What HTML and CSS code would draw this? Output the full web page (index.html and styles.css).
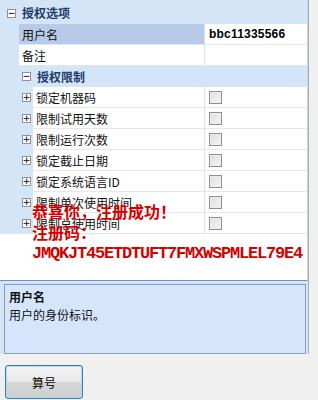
FILE: index.html
```html
<!DOCTYPE html>
<html>
<head>
<meta charset="utf-8">
<link rel="stylesheet" href="styles.css">
</head>
<body>
<div class="frame">
  <div class="grid">
    <div class="cat top"><span class="box">&minus;</span><span class="cat-text">授权选项</span></div>
    <div class="row sel"><span class="margin"></span><span class="name">用户名</span><span class="val strong">bbc11335566</span></div>
    <div class="row"><span class="margin"></span><span class="name">备注</span><span class="val"></span></div>
    <div class="cat sub"><span class="box">&minus;</span><span class="cat-text">授权限制</span></div>
    <div class="row sub"><span class="margin"><span class="box">+</span></span><span class="name">锁定机器码</span><span class="val"><span class="check"></span></span></div>
    <div class="row sub"><span class="margin"><span class="box">+</span></span><span class="name">限制试用天数</span><span class="val"><span class="check"></span></span></div>
    <div class="row sub"><span class="margin"><span class="box">+</span></span><span class="name">限制运行次数</span><span class="val"><span class="check"></span></span></div>
    <div class="row sub"><span class="margin"><span class="box">+</span></span><span class="name">锁定截止日期</span><span class="val"><span class="check"></span></span></div>
    <div class="row sub"><span class="margin"><span class="box">+</span></span><span class="name">锁定系统语言ID</span><span class="val"><span class="check"></span></span></div>
    <div class="row sub"><span class="margin"><span class="box">+</span></span><span class="name">限制单次使用时间</span><span class="val"><span class="check"></span></span></div>
    <div class="row sub"><span class="margin"><span class="box">+</span></span><span class="name">限制总使用时间</span><span class="val"><span class="check"></span></span></div>
    <div class="notice">
      <div class="notice-line">恭喜你，注册成功！</div>
      <div class="notice-line">注册码：</div>
      <div class="notice-code">JMQKJT45ETDTUFT7FMXWSPMLEL79E4</div>
    </div>
  </div>
  <div class="help">
    <div class="help-title">用户名</div>
    <div class="help-text">用户的身份标识。</div>
  </div>
</div>
<button class="btn">算号</button>
</body>
</html>
```
FILE: styles.css
```css
html, body {margin: 0; padding: 0;}
body {background: #f0f0f0; font: 12px "Liberation Sans", "Noto Sans CJK SC", sans-serif; color: #000; width: 318px; height: 400px; overflow: hidden;}

.frame {width: 308px; height: 354px; background: #d5e5f8; border-right: 1px solid #a3adbb; display: flex; flex-direction: column;}
.grid {position: relative; height: 280px; background: #fff; border-bottom: 1px solid #6f8fc4; border-right: 1px solid #c9d4e3; display: flex; flex-direction: column;}

.cat {display: flex; align-items: center; background: #d5e5f8; color: #1d3b6b; font-weight: bold; height: 21px; flex: none;}
.cat.top {height: 24px; padding-left: 7px;}
.cat.top .box {margin-top: 2px;}
.cat.sub {padding-left: 22px;}
.cat-text {margin-left: 6px; font-family: "Noto Sans CJK SC", sans-serif;}

.box {display: inline-flex; align-items: center; justify-content: center; width: 7px; height: 7px; border: 1px solid #8d9199; background: #fff; color: #333; font: bold 9px/7px "DejaVu Sans", sans-serif; flex: none;}

.row {display: flex; height: 21px; flex: none;}
.margin {width: 19px; background: #d5e5f8; flex: none; display: flex; align-items: center;}
.row.sub .margin {width: 33px; padding-left: 22px; box-sizing: border-box;}
.name {width: 186px; flex: none; box-sizing: border-box; padding-left: 3px; border-bottom: 1px solid #e4e7ec; border-right: 1px solid #dfe3e9; display: flex; align-items: center; font-family: "Noto Sans CJK SC", sans-serif; color: #111;}
.row.sub .name {width: 172px;}
.val {flex: 1; box-sizing: border-box; padding-left: 4px; border-bottom: 1px solid #e4e7ec; display: flex; align-items: center;}
.val.strong {font-weight: bold; font-size: 12px; letter-spacing: 0.2px;}
.row.sel .name {background: #b7cae7;}

.check {width: 11px; height: 11px; border: 1px solid #8f8f8f; background: linear-gradient(135deg, #dcdcdc, #f6f6f6); box-shadow: inset 0 0 0 1px #eee;}

.notice {position: absolute; left: 32px; top: 201px; color: #d40000; font-weight: bold;}
.notice-line {font: bold 16px/21px "Noto Sans CJK SC", sans-serif;}
.notice-code {font: bold 17px/21px "Liberation Mono", monospace; letter-spacing: -1.2px;}

.help {margin: 3px 0 0 4px; width: 302px; height: 68px; border: 1px solid #8b9bb3; background: #d5e5fb; box-sizing: content-box; padding: 3px 0 0 4px; box-sizing: border-box; height: 70px;}
.help-title {font: bold 12px/18px "Noto Sans CJK SC", sans-serif; color: #111;}
.help-text {font: 12px/18px "Noto Sans CJK SC", sans-serif; color: #111;}

.btn {display: block; margin: 11px 0 0 5px; width: 78px; height: 34px; border: 1px solid #3d7bad; border-radius: 3px; background: linear-gradient(#f4f4f4, #e8e8e8 50%, #d6d6d6 51%, #cfcfcf); box-shadow: inset 0 0 0 1px #aadcf5; font: 12px "Noto Sans CJK SC", sans-serif; color: #000; padding: 0;}
```
